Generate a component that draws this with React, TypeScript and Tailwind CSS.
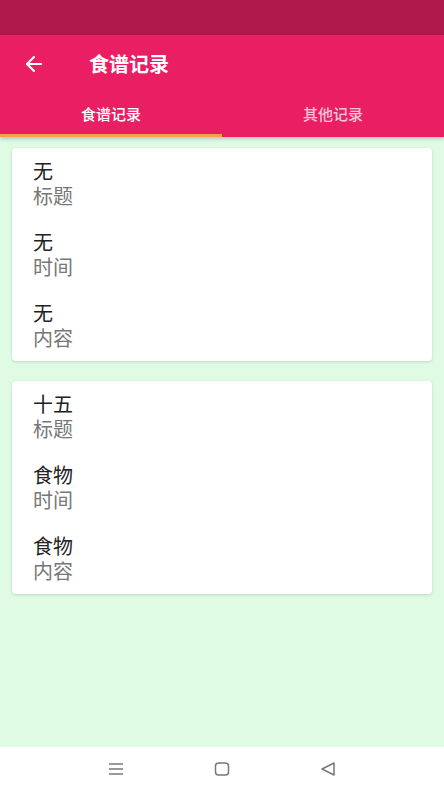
import { ArrowLeft } from "lucide-react";

const cards = [
  [
    { value: "无", label: "标题" },
    { value: "无", label: "时间" },
    { value: "无", label: "内容" },
  ],
  [
    { value: "十五", label: "标题" },
    { value: "食物", label: "时间" },
    { value: "食物", label: "内容" },
  ],
];

export default function App() {
  return (
    <div
      className="flex h-[791px] w-[444px] flex-col overflow-hidden bg-[#e0fbe3]"
      style={{ fontFamily: '"Noto Sans CJK SC", "Noto Sans", sans-serif' }}
    >
      {/* 状态栏 */}
      <div className="h-[35px] shrink-0 bg-[#b0194b]" />

      {/* 标题栏 + 标签 */}
      <div className="relative z-10 shrink-0 bg-[#e91e63] shadow-[0_2px_4px_rgba(0,0,0,0.2)]">
        <div className="flex h-[57px] items-center">
          <ArrowLeft className="ml-[22px] h-[24px] w-[24px] text-white" strokeWidth={2.2} />
          <span className="ml-[43px] text-[20px] font-bold text-white">食谱记录</span>
        </div>
        <div className="flex h-[45px]">
          <div className="relative flex flex-1 items-center justify-center text-[15px] font-medium text-white">
            食谱记录
            <div className="absolute bottom-0 left-0 right-0 h-[3px] bg-[#f4a04a]" />
          </div>
          <div className="flex flex-1 items-center justify-center text-[15px] font-medium text-white/75">
            其他记录
          </div>
        </div>
      </div>

      {/* 列表 */}
      <div className="flex flex-1 flex-col gap-[20px] px-[12px] pt-[11px]">
        {cards.map((rows, i) => (
          <div
            key={i}
            className="flex flex-col gap-[21px] rounded-[4px] bg-white pb-[11px] pl-[21px] pt-[10px] shadow-[0_1px_3px_rgba(0,0,0,0.15)]"
          >
            {rows.map((r, j) => (
              <div key={j} className="flex flex-col">
                <span className="text-[20px] leading-[25px] text-[#222]">{r.value}</span>
                <span className="text-[20px] leading-[25px] text-[#777]">{r.label}</span>
              </div>
            ))}
          </div>
        ))}
      </div>

      {/* 导航栏 */}
      <div className="flex h-[44px] shrink-0 items-center justify-center gap-[90px] bg-white">
        <svg width="16" height="14" viewBox="0 0 16 14" fill="none" stroke="#777" strokeWidth="1.3">
          <path d="M1 2h14M1 7h14M1 12h14" />
        </svg>
        <svg width="16" height="16" viewBox="0 0 16 16" fill="none" stroke="#777" strokeWidth="1.5">
          <rect x="1.5" y="2" width="13" height="12" rx="3" />
        </svg>
        <svg width="16" height="16" viewBox="0 0 16 16" fill="none" stroke="#777" strokeWidth="1.5">
          <path d="M14 2L2 8l12 6z" strokeLinejoin="round" />
        </svg>
      </div>
    </div>
  );
}
